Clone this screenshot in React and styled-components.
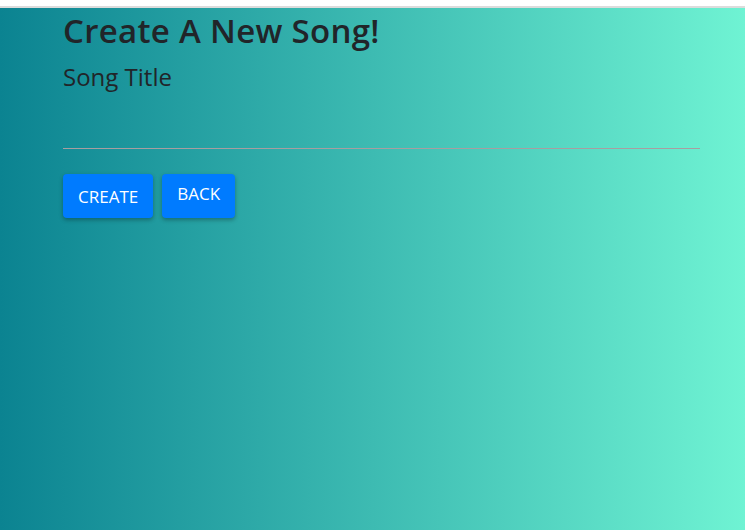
import styled, { createGlobalStyle } from 'styled-components';

const Global = createGlobalStyle`
  html, body {
    margin: 0;
    padding: 0;
    height: 100%;
  }
  body {
    font-family: "Open Sans", "Noto Sans", sans-serif;
    color: #212529;
  }
  #root {
    height: 100%;
  }
`;

const Page = styled.div`
  display: flex;
  flex-direction: column;
  height: 100%;
  background: #fff;
`;

const TopStrip = styled.div`
  height: 6px;
  background: #fff;
  border-bottom: 2px solid #dcdcdc;
`;

const Main = styled.main`
  flex: 1;
  background: linear-gradient(to right, #0b8391, #6ff3d3);
`;

const Form = styled.form`
  width: 637px;
  margin-left: 63px;
  display: flex;
  flex-direction: column;
`;

const Title = styled.h2`
  margin: 3px 0 12px;
  font-size: 33px;
  font-weight: 600;
  line-height: 1.2;
  letter-spacing: 0.3px;
`;

const Label = styled.label`
  font-size: 24px;
  line-height: 1.2;
`;

const Input = styled.input`
  height: 51px;
  margin-top: 4px;
  border: none;
  border-bottom: 1px solid #a89ea0;
  background: transparent;
  outline: none;
  font: inherit;
  font-size: 20px;
`;

const Actions = styled.div`
  display: flex;
  gap: 9px;
  margin-top: 25px;
`;

const Button = styled.button`
  height: 44px;
  padding: ${p => (p.$raised ? '0 15px 5px' : '0 15px 0')};
  border: none;
  border-radius: 4px;
  background: #007bff;
  color: #fff;
  font-family: "Open Sans", "Noto Sans", sans-serif;
  font-size: 17px;
  box-shadow: 0 2px 4px rgba(0, 0, 0, 0.3);
  cursor: pointer;
`;

export default function App() {
  return (
    <>
      <Global />
      <Page>
        <TopStrip />
        <Main>
          <Form onSubmit={e => e.preventDefault()}>
            <Title>Create A New Song!</Title>
            <Label htmlFor="title">Song Title</Label>
            <Input id="title" type="text" />
            <Actions>
              <Button type="submit">CREATE</Button>
              <Button type="button" $raised>BACK</Button>
            </Actions>
          </Form>
        </Main>
      </Page>
    </>
  );
}
